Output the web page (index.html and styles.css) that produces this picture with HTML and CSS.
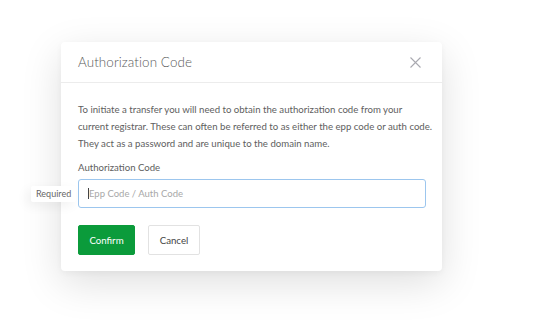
FILE: index.html
```html
<!DOCTYPE html>
<html>
<head>
<meta charset="utf-8">
<link rel="stylesheet" href="styles.css">
</head>
<body>
<div class="page">
  <div class="modal">
    <div class="modal-header">
      <h2 class="modal-title">Authorization Code</h2>
      <svg class="close" width="11" height="11" viewBox="0 0 11 11"><path d="M0.5 0.5L10.5 10.5M10.5 0.5L0.5 10.5" stroke="#a9a9b0" stroke-width="1.1" fill="none"/></svg>
    </div>
    <div class="modal-body">
      <p class="intro">To initiate a transfer you will need to obtain the authorization code from your<br>current registrar. These can often be referred to as either the epp code or auth code.<br>They act as a password and are unique to the domain name.</p>
      <label class="field-label">Authorization Code</label>
      <div class="field">
        <span class="tooltip">Required</span>
        <div class="input"><span class="caret"></span><span class="placeholder">Epp Code / Auth Code</span></div>
      </div>
      <div class="actions">
        <button class="btn btn-primary">Confirm</button>
        <button class="btn btn-default">Cancel</button>
      </div>
    </div>
  </div>
</div>
</body>
</html>
```
FILE: styles.css
```css
html, body {
  margin: 0;
  padding: 0;
  background: #ffffff;
  font-family: Lato, "Open Sans", sans-serif;
}
.page {
  width: 540px;
  height: 321px;
  overflow: hidden;
  padding-top: 42px;
  padding-left: 61px;
  box-sizing: border-box;
}
.modal {
  width: 381px;
  height: 229px;
  background: #fff;
  border-radius: 4px;
  box-shadow: 0 12px 40px rgba(0,0,0,0.13), 0 2px 6px rgba(0,0,0,0.04);
  box-sizing: border-box;
}
.modal-header {
  height: 41px;
  border-bottom: 1px solid #ececec;
  display: flex;
  align-items: center;
  justify-content: space-between;
  padding: 0 21px 0 17px;
  box-sizing: border-box;
}
.modal-title {
  margin: 0;
  font-size: 13.4px;
  font-weight: 300;
  color: #5a5a5a;
  letter-spacing: 0.1px;
}
.close {
  display: block;
}
.modal-body {
  padding: 18px 16px 0 17px;
}
.intro {
  margin: 0;
  font-size: 9.65px;
  line-height: 17px;
  color: #5e5e5e;
  white-space: nowrap;
}
.field-label {
  display: block;
  margin-top: 7px;
  font-size: 9.6px;
  line-height: 17px;
  color: #5e5e5e;
}
.field {
  position: relative;
  margin-top: 3px;
}
.tooltip {
  position: absolute;
  left: -47px;
  top: 7px;
  height: 16px;
  line-height: 16px;
  padding: 0 5px;
  background: #fff;
  font-size: 9px;
  color: #666;
  border-radius: 2px;
  box-shadow: -4px 4px 12px rgba(0,0,0,0.06);
}
.input {
  height: 29px;
  border: 1px solid #9cc6ee;
  border-radius: 3px;
  box-sizing: border-box;
  display: flex;
  align-items: center;
  padding-left: 9px;
}
.caret {
  width: 1px;
  height: 11px;
  background: #444;
}
.placeholder {
  font-size: 9.5px;
  color: #a8a8a8;
}
.actions {
  display: flex;
  gap: 13px;
  margin-top: 17px;
}
.btn {
  height: 30px;
  border-radius: 2px;
  font-family: Lato, "Open Sans", sans-serif;
  font-size: 9.7px;
  padding: 0;
  cursor: pointer;
}
.btn-primary {
  width: 57px;
  background: #0b9b3b;
  border: 1px solid #0b9b3b;
  color: #fff;
}
.btn-default {
  width: 52px;
  background: #fff;
  border: 1px solid #e2e2e2;
  color: #444;
}
```
